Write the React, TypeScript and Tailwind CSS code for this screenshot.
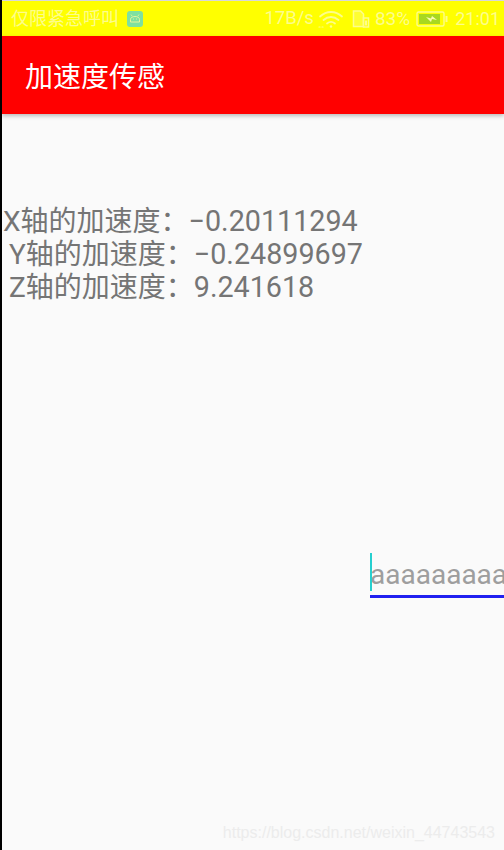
import React from "react";

const cjk = { fontFamily: 'Roboto, "Noto Sans CJK SC", sans-serif' };

function Wifi() {
  return (
    <svg width="26" height="20" viewBox="0 0 26 20" fill="none" stroke="#fdfd8c" strokeWidth="1.8" strokeLinecap="round">
      <path d="M2 7.5C8.5 1.5 17.5 1.5 24 7.5" />
      <path d="M5.5 11C10 7 16 7 20.5 11" />
      <path d="M9 14.5C11.5 12.5 14.5 12.5 17 14.5" />
      <circle cx="13" cy="17.5" r="1.2" fill="#fdfd8c" stroke="none" />
      <path d="M1 18h1M4 18h1" strokeWidth="1.2" />
    </svg>
  );
}

function Sim() {
  return (
    <svg width="18" height="20" viewBox="0 0 18 20" fill="none" stroke="#fdfd8c" strokeWidth="1.5">
      <path d="M1.5 2h7l3 3v12.5h-10z" fill="#fdfd8c" fillOpacity="0.35" />
      <path d="M11.5 9h5v9h-5z" />
      <path d="M14 11.5v5" strokeWidth="2" />
    </svg>
  );
}

function Battery() {
  return (
    <svg width="32" height="16" viewBox="0 0 32 16">
      <rect x="1" y="1" width="27" height="14" rx="1.5" fill="none" stroke="#fdfd8c" strokeWidth="1.4" />
      <rect x="3" y="3" width="21" height="10" fill="#a8d820" />
      <path d="M10 6l5 1.5 1-2.5 5 4-5-1-1 3z" fill="#fbfbb0" />
      <rect x="29.5" y="5" width="2" height="6" fill="#fdfd8c" />
    </svg>
  );
}

function Robot() {
  return (
    <svg width="16" height="16" viewBox="0 0 16 16">
      <rect width="16" height="16" rx="3" fill="#7fe0a0" />
      <path d="M3.5 11V8.5C3.5 6.5 5.5 5.5 8 5.5s4.5 1 4.5 3V11z" fill="none" stroke="#e8f59a" strokeWidth="1" />
      <path d="M5 5L4 3.5M11 5l1-1.5" stroke="#e8f59a" strokeWidth="0.8" />
      <path d="M6 8h.8M9.2 8h.8" stroke="#e8f59a" strokeWidth="1" />
    </svg>
  );
}

export default function App() {
  return (
    <div className="w-[504px] h-[850px] flex flex-col overflow-hidden relative bg-[#fafafa] border-l-2 border-black" style={cjk}>
      <div className="h-px shrink-0 bg-[#d8d8d8] -ml-[2px] w-[504px]" />
      <div className="h-[35px] shrink-0 bg-[#ffff00] flex items-center pl-[9px] pr-[4px] text-[#fdfd8c] text-[18px] leading-[35px]">
        <span>仅限紧急呼叫</span>
        <span className="ml-[8px] flex"><Robot /></span>
        <div className="ml-auto flex items-center">
          <span className="text-[18.5px]">17B/s</span>
          <span className="ml-[4px] flex"><Wifi /></span>
          <span className="ml-[8px] flex"><Sim /></span>
          <span className="ml-[5px] text-[19px]">83%</span>
          <span className="ml-[6px] flex"><Battery /></span>
          <span className="ml-[7px]">21:01</span>
        </div>
      </div>
      <div className="h-[78px] shrink-0 bg-[#ff0000] flex items-center pl-[23px] pt-[6px] text-white text-[28px] shadow-[0_2px_4px_rgba(0,0,0,0.25)] z-10">
        加速度传感
      </div>
      <div className="mt-[91px] flex flex-col text-[28px] leading-[33px] text-[#757575] whitespace-nowrap">
        <div className="pl-px">X轴的加速度：<span className="text-[28.7px]">−0.20111294</span></div>
        <div className="pl-[7px]">Y轴的加速度：<span className="text-[28.7px]">−0.24899697</span></div>
        <div className="pl-[7px]">Z轴的加速度：<span className="text-[28.7px]">9.241618</span></div>
      </div>
      <div className="mt-[249px] ml-[368px] h-[45px] flex flex-col justify-end relative">
        <div className="absolute left-0 top-0 w-[2px] h-[38px] bg-[#26cfcf]" />
        <div className="text-[28px] leading-[43px] h-[38px] text-[#9e9e9e] whitespace-nowrap">aaaaaaaaaaaaaa</div>
        <div className="mt-[4px] h-[3px] bg-[#2020f0]" />
      </div>
      <div className="absolute right-[9px] bottom-[8px] text-[16px] leading-[18px] text-[#ececec]" style={{ fontFamily: '"Liberation Sans", sans-serif' }}>
        https://blog.csdn.net/weixin_44743543
      </div>
    </div>
  );
}
